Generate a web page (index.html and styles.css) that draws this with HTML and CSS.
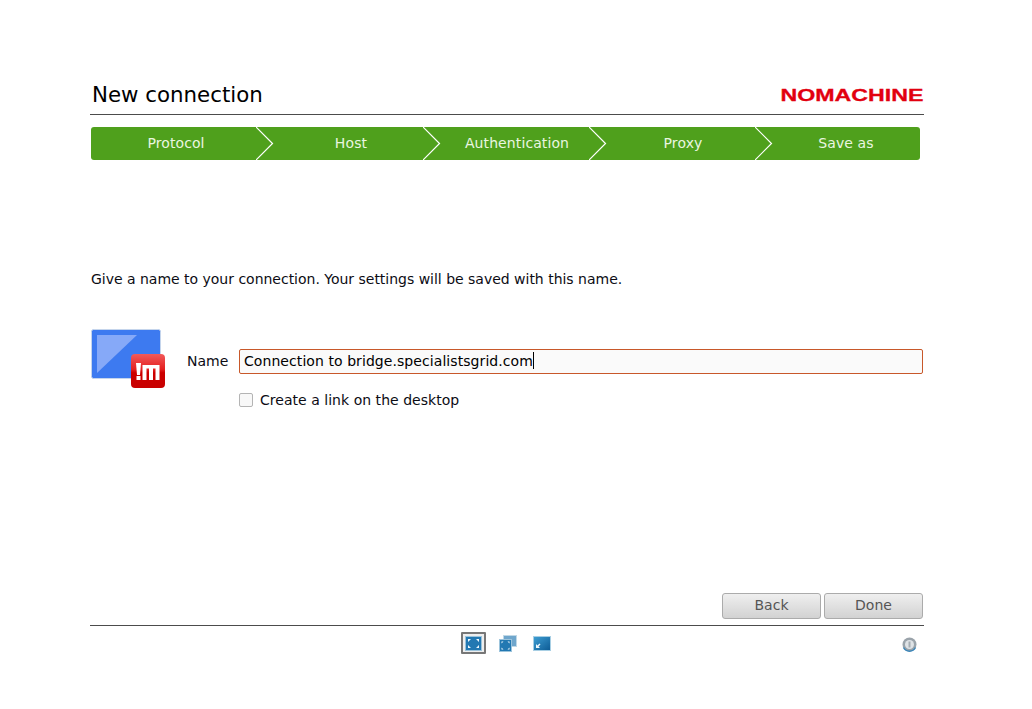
FILE: index.html
```html
<!DOCTYPE html>
<html lang="en">
<head>
<meta charset="utf-8">
<title>New connection</title>
<link rel="stylesheet" href="styles.css">
</head>
<body>
<main class="app">
  <header class="header">
    <h1 class="title">New connection</h1>
    <svg class="logo" width="144" height="16" viewBox="0 0 144 16"><text x="0.500" y="14" textLength="143" lengthAdjust="spacingAndGlyphs" class="logo-text">NOMACHINE</text></svg>
  </header>
  <nav class="steps">
    <div class="step step-first">Protocol<svg class="chev" width="18" height="33" viewBox="0 0 18 33"><polyline points="0,0 16.5,16.5 0,33"/></svg></div>
    <div class="step step-b">Host<svg class="chev" width="18" height="33" viewBox="0 0 18 33"><polyline points="0,0 16.5,16.5 0,33"/></svg></div>
    <div class="step step-c">Authentication<svg class="chev" width="18" height="33" viewBox="0 0 18 33"><polyline points="0,0 16.5,16.5 0,33"/></svg></div>
    <div class="step step-c">Proxy<svg class="chev" width="18" height="33" viewBox="0 0 18 33"><polyline points="0,0 16.5,16.5 0,33"/></svg></div>
    <div class="step step-last">Save as</div>
  </nav>
  <p class="intro">Give a name to your connection. Your settings will be saved with this name.</p>
  <section class="form">
    <div class="conn-icon">
      <svg width="75" height="60" viewBox="0 0 75 60">
        <defs>
          <linearGradient id="red" x1="0" y1="0" x2="0" y2="1"><stop offset="0" stop-color="#f25a5a"/><stop offset=".45" stop-color="#e42020"/><stop offset=".55" stop-color="#cc0000"/><stop offset="1" stop-color="#c80000"/></linearGradient>
        </defs>
        <rect x="0.500" y="0.500" width="69" height="49" rx="2" fill="#3d7af0" stroke="#c5d5ec"/>
        <polygon points="6,6 46,6 6,44" fill="#86a9f8"/>
        <rect x="40" y="25" width="34" height="34" rx="4" fill="url(#red)"/>
        <polygon points="45,34 50,34 49,46 46,46" fill="#fff"/>
        <rect x="45.500" y="47" width="4" height="4" fill="#fff"/>
        <path d="M51.500 51V36H68.500V51H64.500V39.500H62V51H58V39.500H55.500V51Z" fill="#fff"/>
      </svg>
    </div>
    <div class="fields">
      <div class="name-row">
        <label class="name-label">Name</label>
        <div class="name-input">Connection to bridge.specialistsgrid.com<span class="caret"></span></div>
      </div>
      <div class="check-row">
        <span class="check"></span>
        <span class="check-text">Create a link on the desktop</span>
      </div>
    </div>
  </section>
  <div class="actions">
    <button class="btn">Back</button>
    <button class="btn">Done</button>
  </div>
  <footer class="footer">
    <div class="views">
      <span class="view view-active">
        <svg width="17" height="15" viewBox="0 0 17 15"><rect x="0.500" y="0.500" width="16" height="14" fill="#2278b2" stroke="#9cc4dc"/><path d="M3 3h3L3 6zM14 3h-3l3 3zM3 12h3L3 9zM14 12h-3l3-3z" fill="#eef8fd"/></svg>
      </span>
      <span class="view">
        <svg width="18" height="17" viewBox="0 0 18 17"><rect x="4.500" y="0.500" width="13" height="11" fill="#6fa6cc" stroke="#c0d8e6"/><rect x="0.500" y="4.500" width="12" height="12" fill="#2278b2" stroke="#9cc4dc"/><path d="M2.500 6.500h2l-2 2zM10.500 6.500h-2l2 2zM2.500 14.500h2l-2-2zM10.500 14.500h-2l2-2z" fill="#eef8fd"/></svg>
      </span>
      <span class="view">
        <svg width="18" height="15" viewBox="0 0 18 15"><defs><linearGradient id="blue" x1="0" y1="0" x2="1" y2="1"><stop offset="0" stop-color="#3f9fd4"/><stop offset="1" stop-color="#0c5a94"/></linearGradient></defs><rect x="0.500" y="0.500" width="17" height="14" fill="url(#blue)" stroke="#a8cfe4"/><path d="M3 12V8l1.400 1.400L6.500 7.500 7.500 8.500 5.500 10.500 7 12Z" fill="#eef8fd"/></svg>
      </span>
    </div>
    <svg class="power" width="15" height="15" viewBox="0 0 15 15"><circle cx="7.500" cy="7.500" r="7" fill="#9aa3aa"/><path d="M1.500 10.500a6.700 6.700 0 0 0 12 0" fill="none" stroke="#3a86ba" stroke-width="1.500"/><circle cx="7.500" cy="7.500" r="4.500" fill="#dfe3e6"/><rect x="6.500" y="4.500" width="2" height="6" fill="#a5adb3"/></svg>
  </footer>
</main>
</body>
</html>
```
FILE: styles.css
```css
html, body {
  margin: 0;
  padding: 0;
  background: #fff;
}
body {
  font-family: "DejaVu Sans", sans-serif;
  font-size: 14px;
  color: #0c0c14;
  width: 1032px;
  height: 709px;
  overflow: hidden;
}
.app {
  width: 834px;
  margin-left: 90px;
  padding-top: 80px;
}
.header {
  display: flex;
  justify-content: space-between;
  align-items: center;
  box-sizing: content-box;
  height: 30px;
  padding-bottom: 4px;
  border-bottom: 1px solid #4c4c4c;
}
.title {
  margin: 0 0 0 2px;
  font-size: 21.33px;
  font-weight: 400;
  line-height: 28px;
  color: #000;
}
.logo {
  display: block;
}
.logo-text {
  font-family: "Liberation Sans", sans-serif;
  font-weight: 700;
  font-size: 16.5px;
  fill: #e2000f;
  stroke: #e2000f;
  stroke-width: 0.3px;
}
.steps {
  display: flex;
  width: 829px;
  height: 33px;
  margin: 12px 0 0 1px;
  background: #4fa01c;
  border-radius: 3px;
  color: #eaf6e0;
}
.step {
  position: relative;
  display: flex;
  align-items: center;
  justify-content: center;
  box-sizing: border-box;
  height: 33px;
  padding: 0 0 2px 22px;
  width: 166px;
  letter-spacing: 0.1px;
}
.step-first {
  width: 165px;
  padding-left: 5px;
}
.step-b {
  width: 167px;
  padding-left: 23px;
}
.step-last {
  width: 165px;
  padding-left: 17px;
}
.chev {
  position: absolute;
  left: 100%;
  top: 0;
  fill: none;
  stroke: #fff;
  stroke-width: 1.2;
}
.intro {
  margin: 111px 0 0 1px;
  line-height: 17px;
  letter-spacing: -0.015px;
}
.form {
  display: flex;
  margin: 41px 0 0 1px;
  height: 264px;
}
.conn-icon {
  width: 96px;
  flex: none;
}
.conn-icon svg {
  display: block;
}
.fields {
  flex: 1;
  padding-top: 20px;
}
.name-row {
  display: flex;
  align-items: center;
}
.name-label {
  width: 52px;
  flex: none;
  padding-bottom: 2px;
}
.name-input {
  box-sizing: border-box;
  width: 684px;
  height: 25px;
  line-height: 23px;
  padding-left: 4px;
  border: 1px solid #c8582a;
  border-radius: 2px;
  background: #fafafa;
  color: #000;
  letter-spacing: 0.07px;
}
.caret {
  display: inline-block;
  width: 1px;
  height: 17px;
  background: #000;
  vertical-align: -3px;
}
.check-row {
  display: flex;
  align-items: center;
  gap: 7px;
  margin: 17px 0 0 52px;
  height: 18px;
}
.check-text {
  letter-spacing: 0.03px;
}
.check {
  box-sizing: border-box;
  width: 14px;
  height: 14px;
  border: 1px solid #b4b4b4;
  border-radius: 2px;
  background: #f8f8f8;
}
.actions {
  display: flex;
  justify-content: flex-end;
  gap: 3px;
  height: 26px;
  padding-right: 1px;
}
.btn {
  box-sizing: border-box;
  width: 99px;
  height: 26px;
  padding: 0 0 2px;
  border: 1px solid #ababab;
  border-radius: 3px;
  background: linear-gradient(#efefef, #d2d2d2);
  font: 14px "DejaVu Sans", sans-serif;
  color: #555;
}
.footer {
  position: relative;
  margin-top: 6px;
  border-top: 1px solid #4c4c4c;
  height: 36px;
}
.views {
  display: flex;
  align-items: center;
  gap: 9px;
  position: absolute;
  left: 371px;
  top: 6px;
  height: 22px;
}
.view {
  display: flex;
  align-items: center;
  justify-content: center;
  box-sizing: border-box;
  width: 25px;
  height: 22px;
}
.view-active {
  border: 2px solid #777;
  border-radius: 1px;
  background: #eee;
}
.power {
  position: absolute;
  left: 812px;
  top: 11px;
}
```
